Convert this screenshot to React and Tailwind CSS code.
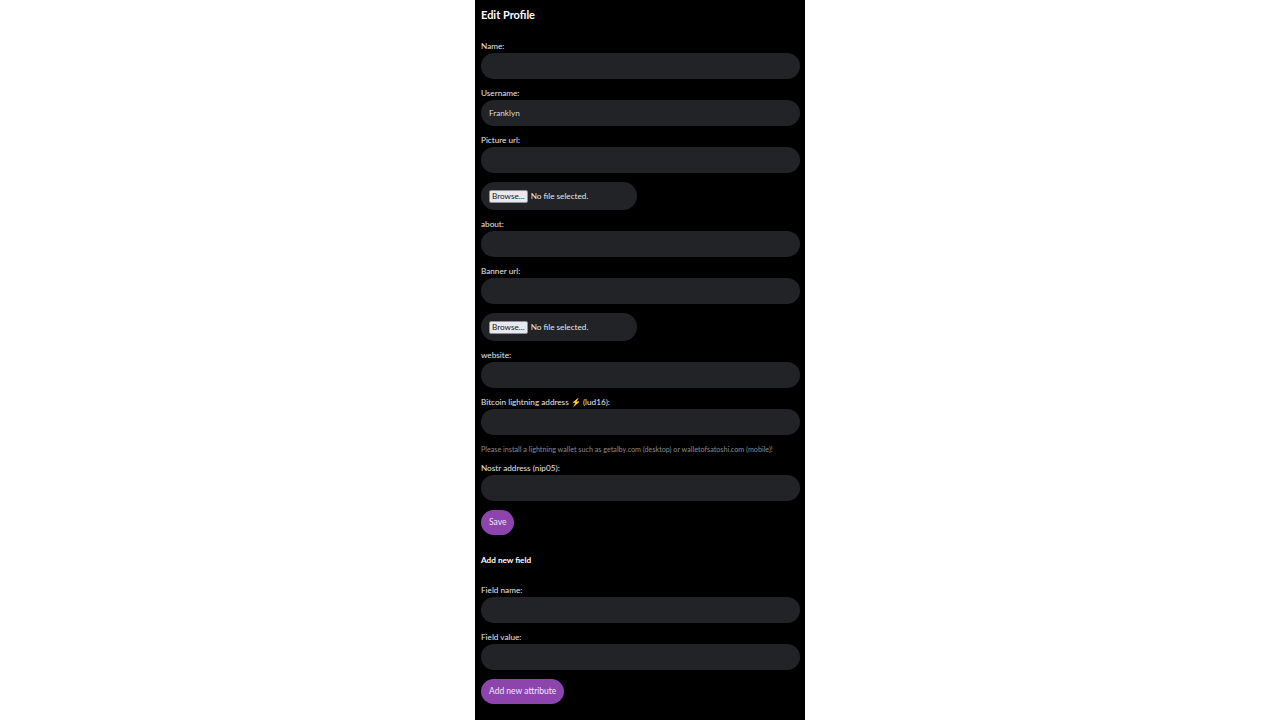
import React from "react";

const font = { fontFamily: "Lato, 'Noto Sans', sans-serif" };

function Field({ label, value, className = "" }) {
  return (
    <div className={className}>
      <label className="block text-[8.2px] leading-[12px] text-[#e6e6e6] mb-[1px]">{label}</label>
      <div className="h-[26px] w-full rounded-full bg-[#212327] flex items-center px-2 text-[8.2px] text-[#dcdcdc]">
        {value}
      </div>
    </div>
  );
}

function FileInput({ className = "" }) {
  return (
    <div className={`w-[156px] h-[28px] rounded-full bg-[#212327] flex items-center pl-2 gap-[3px] ${className}`}>
      <span className="bg-[#e9e9ed] border border-[#8f8f9d] rounded-[2px] text-[8.2px] leading-[11px] text-[#1b1b1b] px-[2px]">
        Browse...
      </span>
      <span className="text-[8.2px] text-[#e6e6e6]">No file selected.</span>
    </div>
  );
}

export default function App() {
  return (
    <div className="min-h-screen w-full bg-white" style={font}>
      <div className="mx-auto w-[330px] min-h-[720px] bg-black pl-[6px] pr-[5px] pt-[8px] pb-4">
        {/* Title */}
        <h1 className="text-[11px] leading-[14px] font-bold text-white">Edit Profile</h1>

        <Field label="Name:" className="mt-[18px]" />
        <Field label="Username:" value="Franklyn" className="mt-[8px]" />
        <Field label="Picture url:" className="mt-[8px]" />
        <FileInput className="mt-[9px]" />
        <Field label="about:" className="mt-[8px]" />
        <Field label="Banner url:" className="mt-[8px]" />
        <FileInput className="mt-[9px]" />
        <Field label="website:" className="mt-[8px]" />
        <Field label="Bitcoin lightning address ⚡ (lud16):" className="mt-[8px]" />

        <p className="mt-[10px] text-[7.2px] leading-[10px] text-[#8a8a8a]">
          Please install a lightning wallet such as getalby.com (desktop) or walletofsatoshi.com (mobile)!
        </p>

        <Field label="Nostr address (nip05):" className="mt-[7px]" />

        <button className="mt-[9px] h-[25px] px-[8px] rounded-full bg-[#8e44ad] text-[8.5px] text-[#f0e6f5]">
          Save
        </button>

        <h2 className="mt-[19px] text-[8.2px] leading-[12px] font-bold text-white">Add new field</h2>

        <Field label="Field name:" className="mt-[18px]" />
        <Field label="Field value:" className="mt-[8px]" />

        <button className="mt-[9px] h-[25px] px-[8px] rounded-full bg-[#8e44ad] text-[8.5px] text-[#f0e6f5]">
          Add new attribute
        </button>
      </div>
    </div>
  );
}
